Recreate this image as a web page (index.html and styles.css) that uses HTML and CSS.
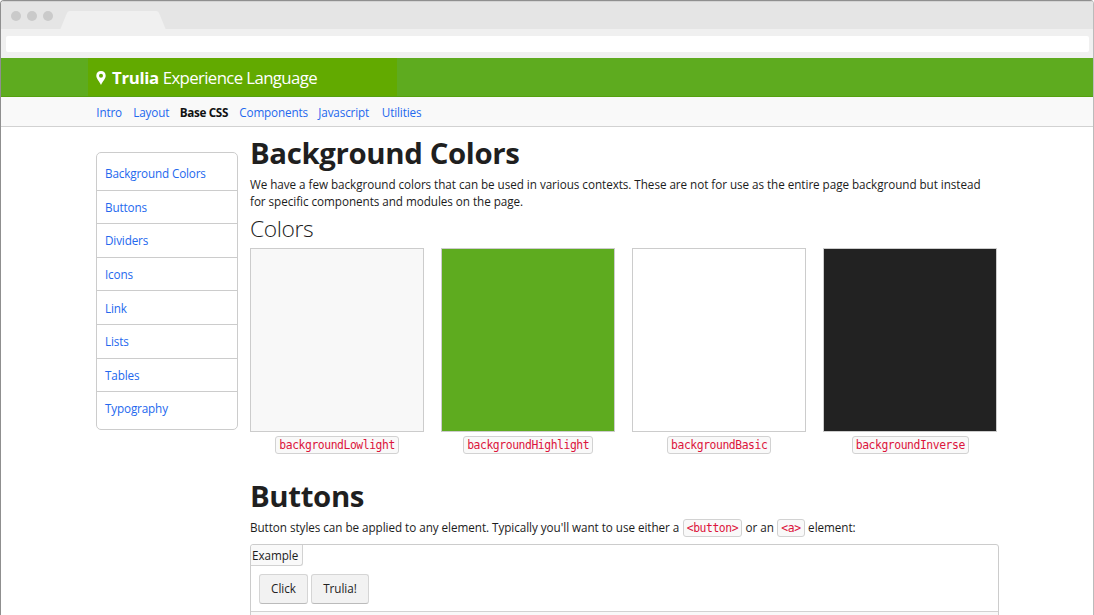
FILE: index.html
```html
<!DOCTYPE html>
<html lang="en">
<head>
<meta charset="utf-8">
<title>Trulia Experience Language</title>
<link rel="stylesheet" href="styles.css">
</head>
<body>
<div class="window">
  <div class="tabbar">
    <span class="dot"></span><span class="dot"></span><span class="dot"></span>
    <svg class="tab" width="108" height="19" viewBox="0 0 108 19"><path d="M0 19 L6.500 3 Q7.500 0 10 0 H96 Q98.500 0 99.500 3 L106 19Z" fill="#f0f0f0"/></svg>
  </div>
  <div class="toolbar"><div class="address"></div></div>
  <header class="banner">
    <div class="brand">
      <svg class="pin" width="10" height="14" viewBox="0 0 10 14"><path fill="#fff" fill-rule="evenodd" d="M5 0C2.200 0 .3 2 .3 4.700C.3 7.500 3.500 10.500 5 14C6.500 10.500 9.700 7.500 9.700 4.700C9.700 2 7.800 0 5 0ZM5 2.700A2 2 0 1 1 5 6.700A2 2 0 1 1 5 2.700Z"/></svg>
      <span class="title"><b>Trulia</b> Experience Language</span>
    </div>
  </header>
  <nav class="nav">
    <a class="n1">Intro</a><a class="n2">Layout</a><a class="n3 active">Base CSS</a><a class="n4">Components</a><a class="n5">Javascript</a><a class="n6">Utilities</a>
  </nav>
  <div class="page">
    <ul class="side">
      <li>Background Colors</li><li>Buttons</li><li>Dividers</li><li>Icons</li><li>Link</li><li>Lists</li><li>Tables</li><li>Typography</li>
    </ul>
    <main class="main">
      <h1>Background Colors</h1>
      <p>We have a few background colors that can be used in various contexts. These are not for use as the entire page background but instead<br>for specific components and modules on the page.</p>
      <h2>Colors</h2>
      <div class="swatches">
        <div class="swatch"><div class="box lowlight"></div><code>backgroundLowlight</code></div>
        <div class="swatch"><div class="box highlight"></div><code>backgroundHighlight</code></div>
        <div class="swatch"><div class="box basic"></div><code>backgroundBasic</code></div>
        <div class="swatch"><div class="box inverse"></div><code>backgroundInverse</code></div>
      </div>
      <h1 class="second">Buttons</h1>
      <p>Button styles can be applied to any element. Typically you'll want to use either a <code>&lt;button&gt;</code> or an <code>&lt;a&gt;</code> element:</p>
      <div class="example">
        <div class="label">Example</div>
        <div class="buttons"><button class="click">Click</button><button class="trulia">Trulia!</button></div>
        <div class="source"></div>
      </div>
    </main>
  </div>
</div>
</body>
</html>
```
FILE: styles.css
```css
* { box-sizing: border-box; }
body { margin: 0; background: #fff; font: 11.7px/16.8px "Open Sans", sans-serif; letter-spacing: -.048px; color: #1c1c1c; }
.window { width: 1094px; height: 615px; overflow: hidden; border: 1px solid #8f8f8f; border-right-color: #bbb; border-bottom: 0; border-radius: 4px 4px 0 0; }
.tabbar { height: 28px; background: #e5e5e5; border-top: 1px solid #d4d4d4; display: flex; padding-left: 9.500px; }
.dot { width: 10px; height: 10px; margin: 9px 6px 0 0; border-radius: 50%; background: #cacaca; }
.tab { margin: 9px 0 0 1.500px; }
.toolbar { height: 29px; background: #f0f0f0; padding: 7px 4px 6px 5px; }
.address { height: 16px; background: #fff; border-radius: 2px; }
.banner { height: 39px; background: #5eab1f; padding-left: 87px; border-bottom: 1px solid #55a00f; }
.brand { width: 309px; height: 38px; background: #62aa00; display: flex; align-items: center; padding: 1px 0 0 8px; color: #fff; }
.pin { flex: none; margin-right: 6px; }
.title { font-size: 16.8px; line-height: 37px; letter-spacing: -.62px; white-space: nowrap; }
.title b { font-weight: 700; letter-spacing: -.3px; }
.nav { height: 30px; background: #f9f9f9; border-bottom: 1px solid #d2d2d2; display: flex; padding: 7px 0 0 95.300px; color: #2468ee; white-space: nowrap; letter-spacing: -.14px; }
.nav a { flex: none; }
.n1 { width: 37px; } .n2 { width: 46.500px; } .n3 { width: 59.500px; } .n4 { width: 79px; } .n5 { width: 63.500px; } .n6 { width: 50px; }
.nav .active { color: #111; font-weight: 700; letter-spacing: -.34px; }
.page { display: flex; padding-left: 95px; }
.side { list-style: none; width: 142px; height: 278px; margin: 25px 12px 0 0; padding: 4px 0; border: 1px solid #ccc; border-radius: 5px; color: #2468ee; letter-spacing: -.14px; }
.side li { height: 33.6px; padding: 8.3px 8px 0; border-bottom: 1px solid #ccc; }
.side li:last-child { border: 0; }
.main { width: 748.500px; flex: none; white-space: nowrap; }
h1 { margin: 9px 0 6px; font-size: 29.4px; line-height: 34px; font-weight: 700; letter-spacing: -.38px; color: #1f1f1f; }
p { margin: 0; }
h2 { margin: 6px 0 6px; font-size: 22.8px; line-height: 26px; font-weight: 300; letter-spacing: -.4px; }
.swatches { display: flex; gap: 16.9px; }
.swatch { width: 174.2px; text-align: center; }
.box { height: 184px; border: 1px solid #ccc; margin-bottom: 4px; }
.lowlight { background: #f8f8f8; }
.highlight { background: #5eab1f; }
.inverse { background: #222; }
code { display: inline-block; font: 11.4px/17px "DejaVu Sans Mono", monospace; letter-spacing: -.44px; color: #dc143c; background: #f9f9f9; border: 1px solid #d2d2d2; border-radius: 3px; padding: 0 3px; height: 18px; }
.second { margin-top: 25px; }
p code { margin: 0 .5px; }
.example { height: 90px; margin-top: 7px; border: 1px solid #ccc; border-radius: 3px; }
.label { width: 52px; height: 21px; padding: 2px 0 0 1px; background: #f9f9f9; border: 1px solid #d2d2d2; border-width: 0 1px 1px 0; border-radius: 3px 0 3px 0; }
.buttons { display: flex; gap: 3px; padding: 8px 0 0 8px; height: 45px; }
button { height: 30px; padding: 0; font: inherit; letter-spacing: inherit; color: #222; background: #f2f2f2; border: 1px solid #d5d5d5; border-bottom-color: #bbb; border-radius: 3px; }
.click { width: 49px; } .trulia { width: 58px; }
.source { height: 22px; background: #f9f9f9; border-top: 1px solid #d2d2d2; }
```
